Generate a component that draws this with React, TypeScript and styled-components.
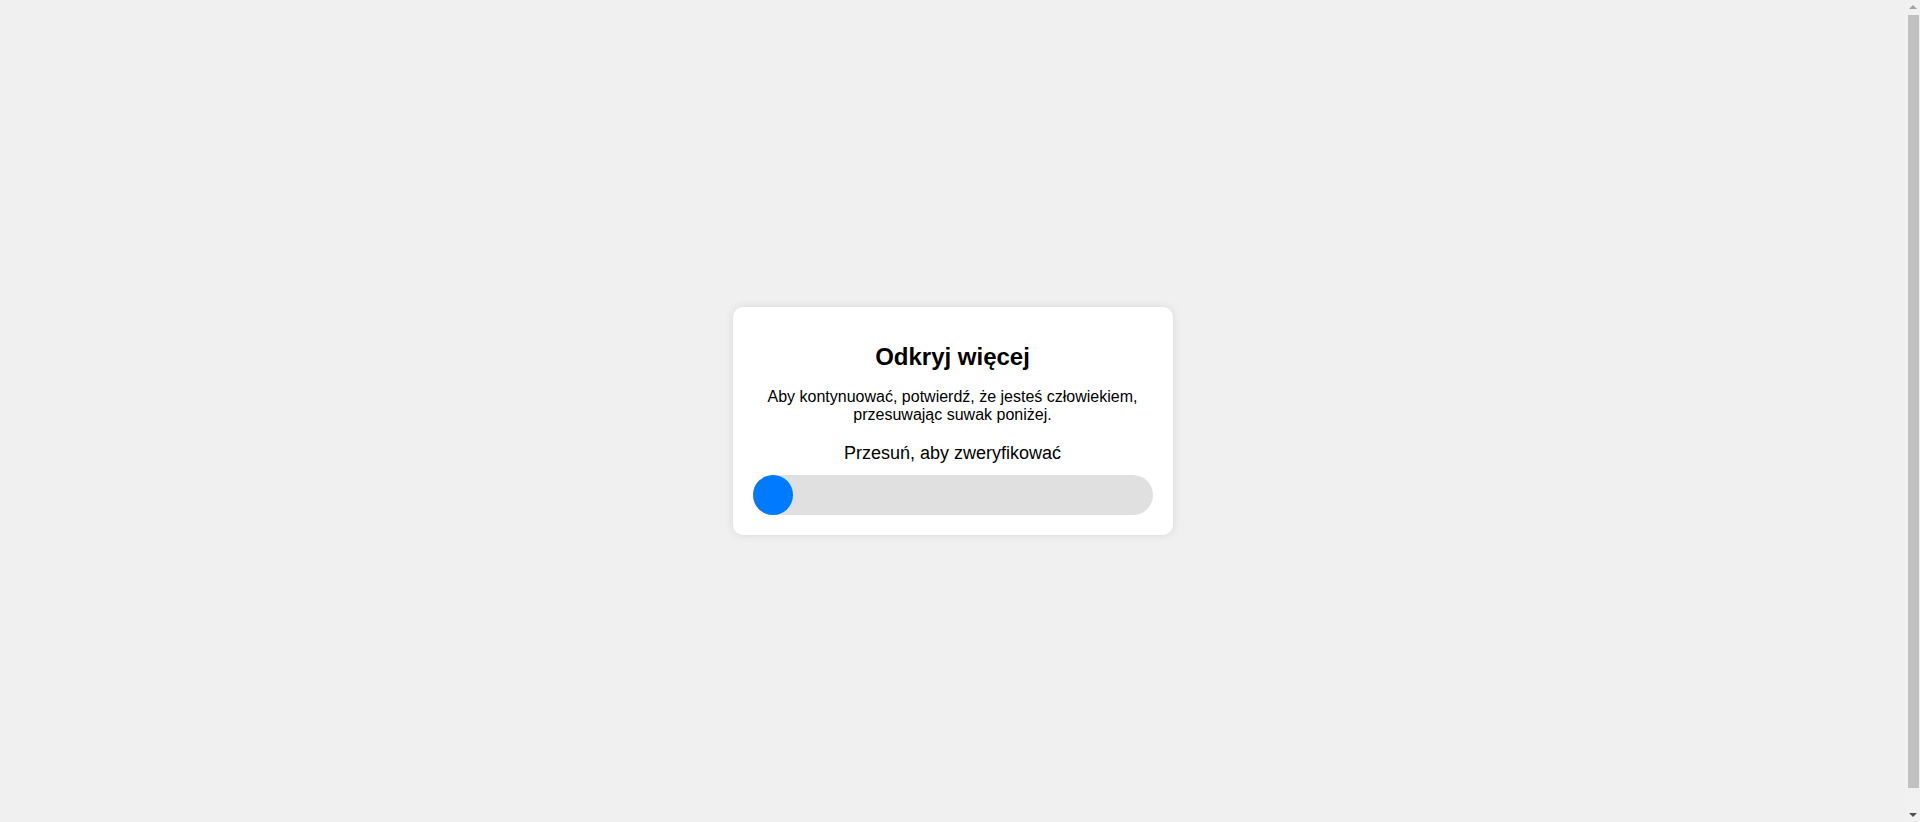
import React from 'react';
import styled, { createGlobalStyle } from 'styled-components';

const GlobalStyle = createGlobalStyle`
  html {
    background: #f0f0f0;
  }
  body {
    margin: 8px 23px 8px 8px;
    height: 100vh;
    display: flex;
    align-items: center;
    justify-content: center;
    background: #f0f0f0;
    font-family: "Liberation Sans", Arial, sans-serif;
  }
`;

const Card = styled.div`
  width: 400px;
  margin-top: 4px;
  padding: 20px;
  background: #ffffff;
  border-radius: 10px;
  box-shadow: 0 0 10px rgba(0, 0, 0, 0.1);
  text-align: center;
  color: #000;
`;

const Title = styled.h2`
  font-size: 24px;
  font-weight: bold;
  margin: 16px 0 17px;
`;

const Text = styled.p`
  font-size: 16px;
  margin: 0 0 19px;
`;

const Label = styled.div`
  font-size: 18px;
  margin-bottom: 11px;
`;

const Track = styled.div`
  position: relative;
  height: 40px;
  border-radius: 20px;
  background: #e0e0e0;
`;

const Knob = styled.div<{ $offset: number }>`
  position: absolute;
  top: 0;
  left: ${(p) => p.$offset}px;
  width: 40px;
  height: 40px;
  border-radius: 50%;
  background: #007bff;
  cursor: pointer;
`;

// fake classic scrollbar, as in the screenshot
const ScrollBar = styled.div`
  position: fixed;
  top: 0;
  right: 0;
  width: 15px;
  height: 100vh;
  display: flex;
  flex-direction: column;
  background: #f1f1f1;
`;

const Arrow = styled.div<{ $down?: boolean }>`
  height: 15px;
  display: flex;
  align-items: center;
  justify-content: center;
  &::after {
    content: '';
    width: 0;
    height: 0;
    border-left: 4px solid transparent;
    border-right: 4px solid transparent;
    ${(p) =>
      p.$down
        ? 'border-top: 4px solid #505050; margin-top: 1px;'
        : 'border-bottom: 4px solid #a3a3a3; margin-top: -1px;'}
  }
`;

const Rail = styled.div`
  flex: 1;
  display: flex;
  justify-content: center;
`;

const Thumb = styled.div`
  width: 11px;
  margin-left: 1px;
  height: 97.6%;
  background: #c1c1c1;
`;

const App = () => {
  return (
    <>
      <GlobalStyle />
      <Card>
        <Title>Odkryj więcej</Title>
        <Text>
          Aby kontynuować, potwierdź, że jesteś człowiekiem, przesuwając suwak poniżej.
        </Text>
        <Label>Przesuń, aby zweryfikować</Label>
        <Track>
          <Knob $offset={0} />
        </Track>
      </Card>
      <ScrollBar>
        <Arrow />
        <Rail>
          <Thumb />
        </Rail>
        <Arrow $down />
      </ScrollBar>
    </>
  );
};

export default App;
